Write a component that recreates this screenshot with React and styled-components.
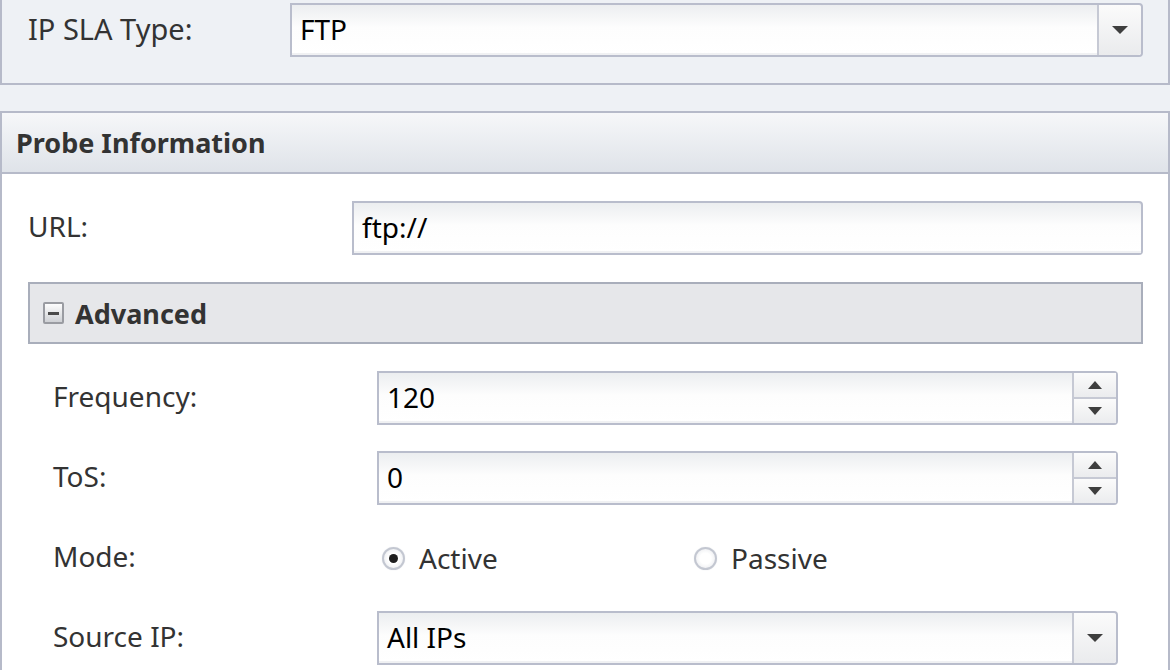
import React from "react";
import styled, { createGlobalStyle } from "styled-components";

const Global = createGlobalStyle`
  html, body {
    margin: 0;
    padding: 0;
    background: #eef1f5;
    font-family: "Noto Sans", "DejaVu Sans", sans-serif;
  }
`;

const Page = styled.div`
  width: 1170px;
  height: 670px;
  overflow: hidden;
  background: #eef1f5;
`;

const TopPanel = styled.div`
  box-sizing: border-box;
  height: 85px;
  border: 2px solid #b6bac9;
  border-top: none;
  padding: 3px 25px 0 26px;
  display: flex;
  align-items: flex-start;
`;

const ProbePanel = styled.div`
  box-sizing: border-box;
  margin-top: 26px;
  border: 2px solid #b6bac9;
  border-bottom: none;
  background: #fff;
  height: 600px;
`;

const PanelHeader = styled.div`
  height: 59px;
  border-bottom: 2px solid #b6bac9;
  background: linear-gradient(#f6f7f9, #dfe3e9);
  display: flex;
  align-items: center;
  padding-left: 14px;
  font-size: 27px;
  font-weight: 700;
  color: #333;
`;

const PanelBody = styled.div`
  padding: 27px 25px 0 26px;
  display: flex;
  flex-direction: column;
  gap: 27px;
`;

const Row = styled.div`
  display: flex;
  align-items: center;
  height: 54px;
  flex: ${(p) => (p.$grow ? 1 : "none")};
`;

const Label = styled.div`
  width: ${(p) => p.$w}px;
  flex: none;
  font-size: ${(p) => p.$size || 28}px;
  color: #333;
  padding-bottom: 4px;
`;

const Field = styled.div`
  box-sizing: border-box;
  flex: 1;
  height: 54px;
  border: 2px solid #b9bdcc;
  border-radius: 0 4px 4px 0;
  background: linear-gradient(#eceef0, #fdfdfd 45%, #fff);
  display: flex;
  align-items: stretch;
`;

const Value = styled.div`
  flex: 1;
  display: flex;
  align-items: center;
  padding-left: 8px;
  font-size: 28px;
  color: #000;
  box-shadow: inset 0 -2px 0 #f0f1f3;
  padding-bottom: 2px;
`;

const SideButton = styled.div`
  width: 42px;
  flex: none;
  border-left: 2px solid #c6c9d4;
  background: linear-gradient(#fbfbfb, #eaebed);
  border-radius: 0 3px 3px 0;
  display: flex;
  align-items: center;
  justify-content: center;
`;

const Spin = styled.div`
  width: 42px;
  flex: none;
  border-left: 2px solid #c6c9d4;
  display: flex;
  flex-direction: column;
`;

const SpinHalf = styled.div`
  flex: 1;
  display: flex;
  align-items: center;
  justify-content: center;
  background: linear-gradient(#fbfbfb, #ebecee);
  & + & {
    border-top: 2px solid #c6c9d4;
  }
`;

const Arrow = styled.div`
  width: 0;
  height: 0;
  border-left: ${(p) => (p.$big ? 8 : 7)}px solid transparent;
  border-right: ${(p) => (p.$big ? 8 : 7)}px solid transparent;
  ${(p) =>
    p.$up ? "border-bottom: 8px solid #3e3e3e;" : "border-top: 8px solid #3e3e3e;"}
`;

const Section = styled.div`
  display: flex;
  flex-direction: column;
`;

const SectionHeader = styled.div`
  box-sizing: border-box;
  height: 62px;
  border: 2px solid #a9aebb;
  background: #e6e7ea;
  display: flex;
  align-items: center;
  padding-left: 13px;
  gap: 11px;
  font-size: 27px;
  font-weight: 700;
  color: #333;
`;

const MinusBox = styled.div`
  box-sizing: border-box;
  flex: none;
  width: 21px;
  height: 22px;
  border: 2px solid #9a9ca2;
  border-radius: 2px;
  background: linear-gradient(#fdfdfd, #cfd1d5);
  display: flex;
  align-items: center;
  justify-content: center;
  &::after {
    content: "";
    width: 11px;
    height: 3px;
    background: #4a4a4a;
  }
`;

const SectionBody = styled.div`
  padding: 27px 25px 0 25px;
  display: flex;
  flex-direction: column;
  gap: 26px;
`;

const RadioGroup = styled.div`
  flex: 1;
  display: flex;
  align-items: center;
  padding-left: 5px;
`;

const RadioItem = styled.label`
  width: 312px;
  display: flex;
  align-items: center;
  gap: 14px;
  font-size: 28px;
  color: #333;
`;

const RadioDot = styled.span`
  box-sizing: border-box;
  flex: none;
  width: 23px;
  height: 23px;
  border-radius: 50%;
  border: 2px solid #c3c7d1;
  box-shadow: 0 0 1px #d5d8df;
  background: radial-gradient(circle, #ffffff 40%, #e4e6ea);
  display: flex;
  align-items: center;
  justify-content: center;
  &::after {
    content: "";
    width: 9px;
    height: 9px;
    border-radius: 50%;
    background: ${(p) => (p.$on ? "#1e1e1e" : "transparent")};
  }
`;

const Select = ({ value }) => (
  <Field>
    <Value>{value}</Value>
    <SideButton>
      <Arrow $big />
    </SideButton>
  </Field>
);

const Spinner = ({ value }) => (
  <Field>
    <Value>{value}</Value>
    <Spin>
      <SpinHalf>
        <Arrow $up />
      </SpinHalf>
      <SpinHalf>
        <Arrow />
      </SpinHalf>
    </Spin>
  </Field>
);

export default function App() {
  return (
    <Page>
      <Global />
      <TopPanel>
        <Row $grow>
          <Label $w={262} $size={29}>IP SLA Type:</Label>
          <Select value="FTP" />
        </Row>
      </TopPanel>
      <ProbePanel>
        <PanelHeader>Probe Information</PanelHeader>
        <PanelBody>
          <Row>
            <Label $w={324}>URL:</Label>
            <Field>
              <Value>ftp://</Value>
            </Field>
          </Row>
          <Section>
            <SectionHeader>
              <MinusBox />
              Advanced
            </SectionHeader>
            <SectionBody>
              <Row>
                <Label $w={324}>Frequency:</Label>
                <Spinner value="120" />
              </Row>
              <Row>
                <Label $w={324}>ToS:</Label>
                <Spinner value="0" />
              </Row>
              <Row>
                <Label $w={324}>Mode:</Label>
                <RadioGroup>
                  <RadioItem>
                    <RadioDot $on />
                    Active
                  </RadioItem>
                  <RadioItem>
                    <RadioDot />
                    Passive
                  </RadioItem>
                </RadioGroup>
              </Row>
              <Row>
                <Label $w={324}>Source IP:</Label>
                <Select value="All IPs" />
              </Row>
            </SectionBody>
          </Section>
        </PanelBody>
      </ProbePanel>
    </Page>
  );
}
